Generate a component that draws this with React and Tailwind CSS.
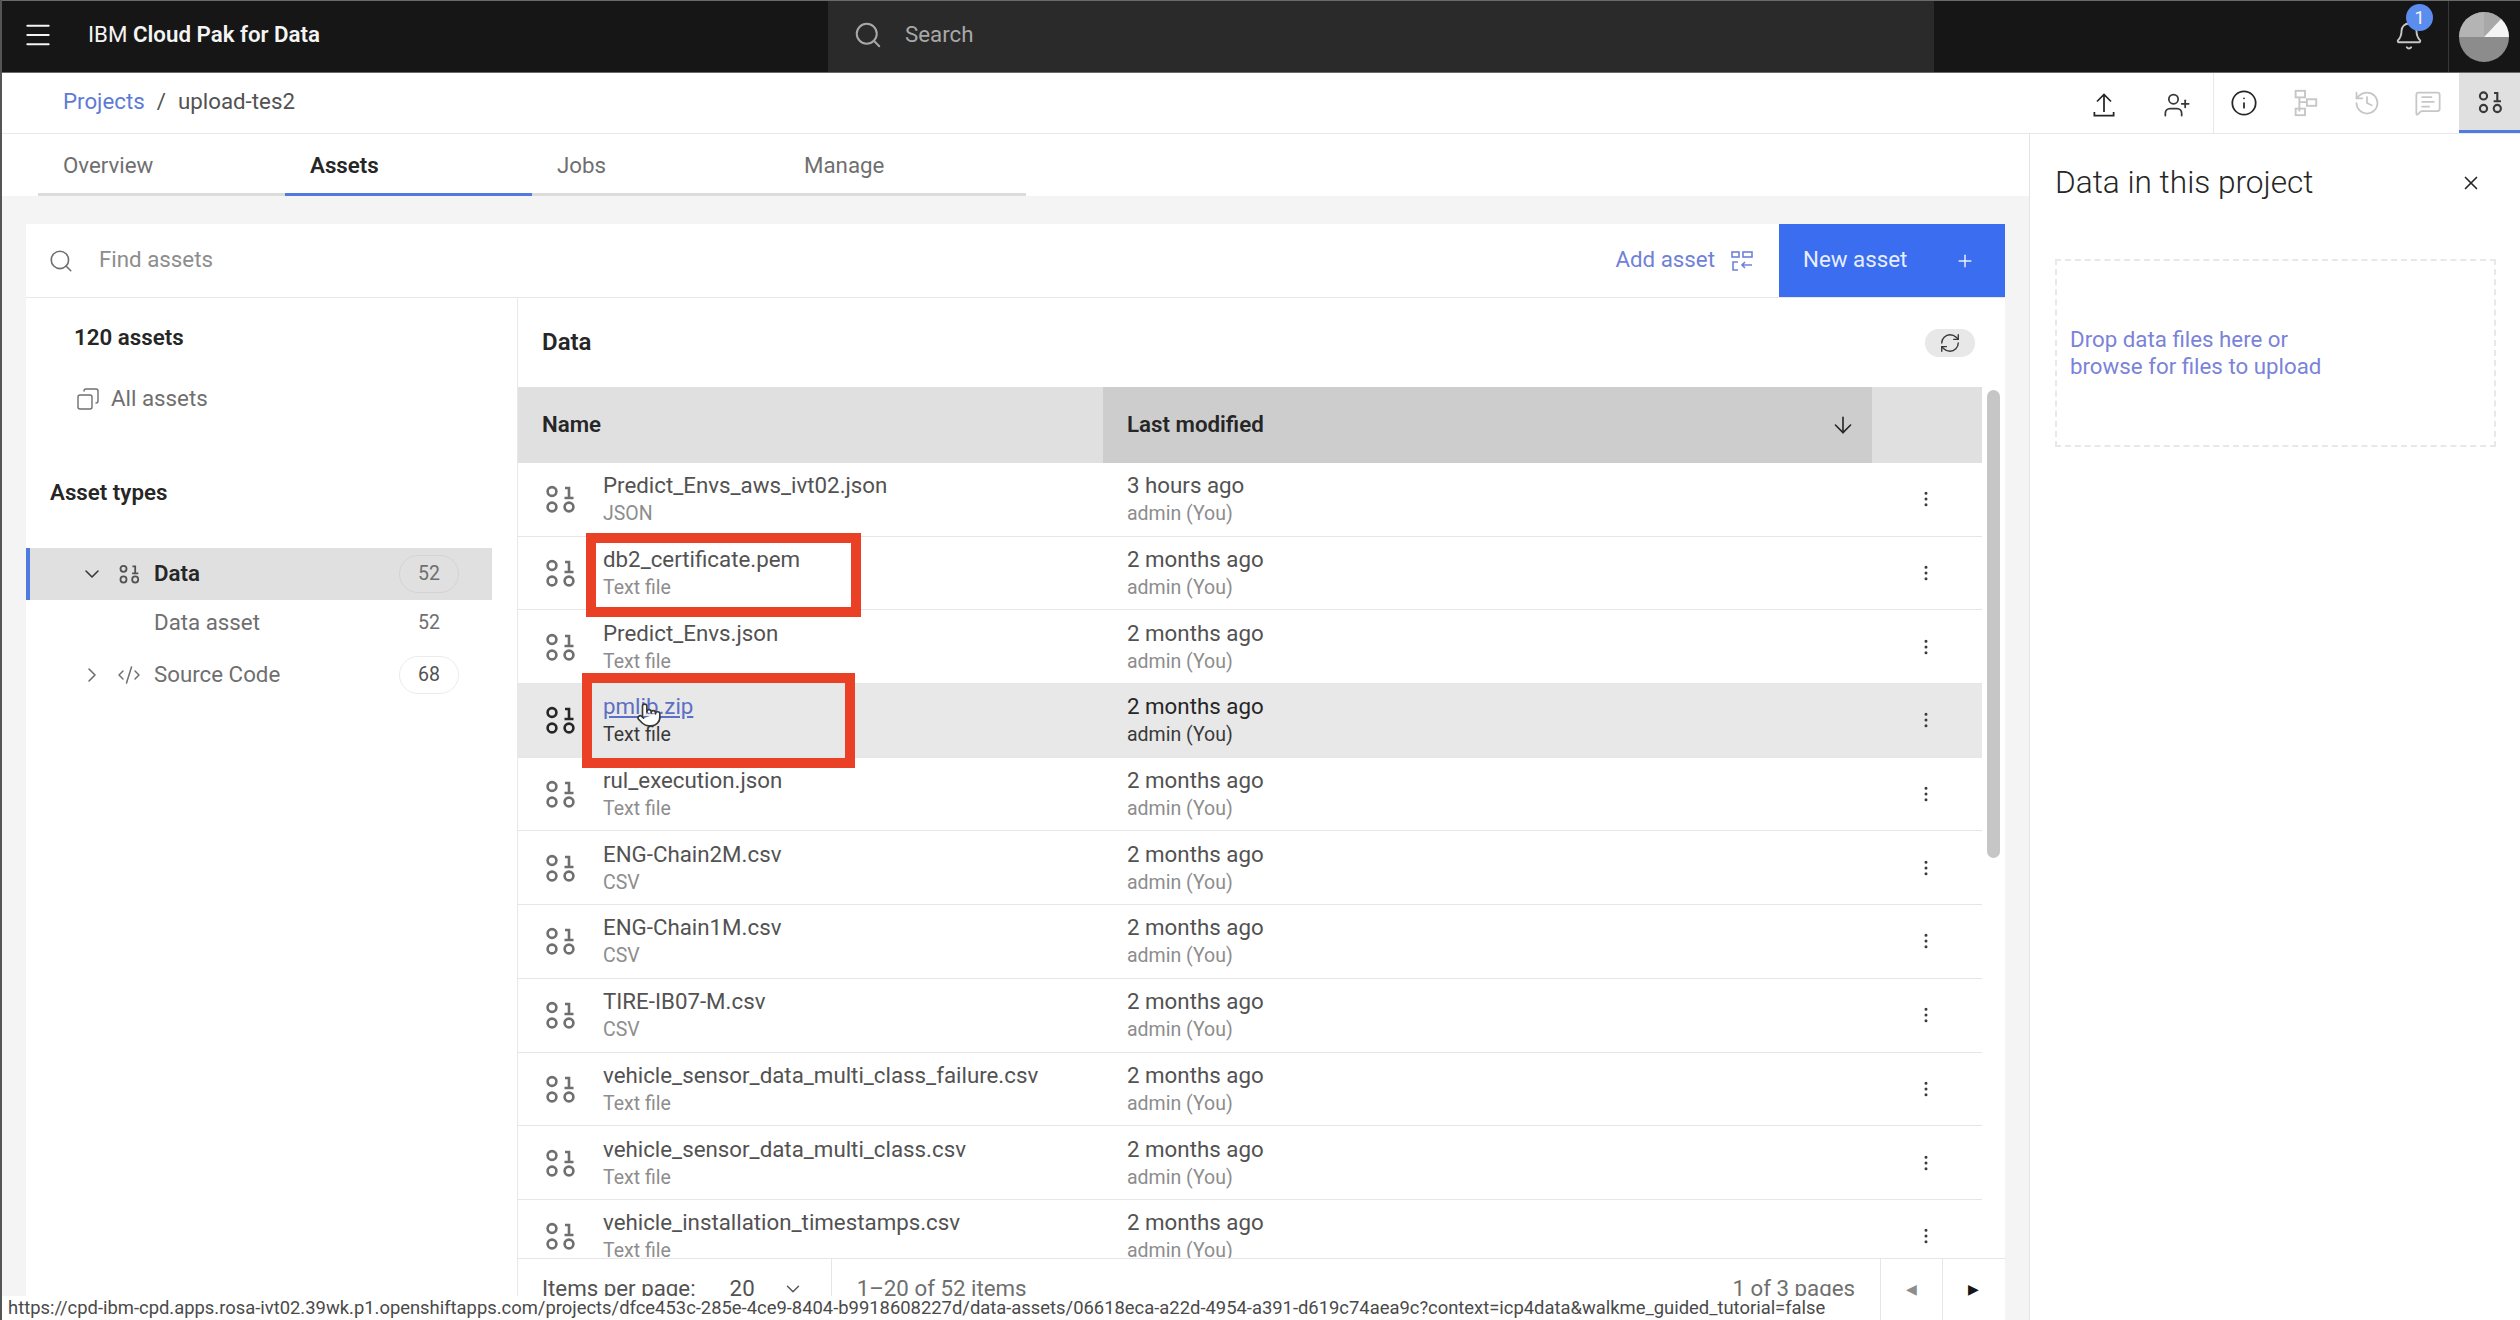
import React from 'react';
import { Menu, Search, Bell, Info, History, MessageSquareText, X, Plus, ChevronDown, ChevronRight, CodeXml, RefreshCw, EllipsisVertical, ArrowDown, Copy, Pointer, UserPlus } from 'lucide-react';

const rows = [
  ['Predict_Envs_aws_ivt02.json', 'JSON', '3 hours ago'],
  ['db2_certificate.pem', 'Text file', '2 months ago'],
  ['Predict_Envs.json', 'Text file', '2 months ago'],
  ['pmlib.zip', 'Text file', '2 months ago', true],
  ['rul_execution.json', 'Text file', '2 months ago'],
  ['ENG-Chain2M.csv', 'CSV', '2 months ago'],
  ['ENG-Chain1M.csv', 'CSV', '2 months ago'],
  ['TIRE-IB07-M.csv', 'CSV', '2 months ago'],
  ['vehicle_sensor_data_multi_class_failure.csv', 'Text file', '2 months ago'],
  ['vehicle_sensor_data_multi_class.csv', 'Text file', '2 months ago'],
  ['vehicle_installation_timestamps.csv', 'Text file', '2 months ago'],
];

const DataIcon = ({ className }) => (
  <svg viewBox="0 0 32 32" fill="none" stroke="currentColor" strokeWidth="2.6" className={className}>
    <circle cx="8" cy="8.5" r="4.4" />
    <circle cx="8" cy="24" r="4.4" />
    <circle cx="25" cy="24" r="4.4" />
    <path d="M21 5h4v10M20.5 15h9" />
  </svg>
);

const UploadIcon = () => (
  <svg viewBox="0 0 32 32" fill="none" stroke="#262626" strokeWidth="2" className="w-[28px] h-[28px]">
    <path d="M16 24V4M8 12l8-8 8 8M5 24v4h22v-4" />
  </svg>
);

const TreeIcon = () => (
  <svg viewBox="0 0 32 32" fill="none" stroke="#c6c6c6" strokeWidth="2" className="w-[30px] h-[30px]">
    <rect x="6" y="3" width="10" height="7" />
    <rect x="18" y="12" width="10" height="7" />
    <rect x="6" y="22" width="10" height="7" />
    <path d="M10 10v15M10 15h8" />
  </svg>
);

const AddAssetIcon = () => (
  <svg viewBox="0 0 22 22" fill="none" stroke="#6f82d6" strokeWidth="1.6" className="w-[22px] h-[22px]">
    <rect x="1" y="2" width="7" height="5" />
    <rect x="12" y="2" width="9" height="5" />
    <path d="M7 12H2v8h5M21 15H11M14 12l-3 3 3 3" />
  </svg>
);

const Avatar = () => (
  <svg viewBox="0 0 50 50" className="w-[50px] h-[50px]">
    <circle cx="25" cy="25" r="25" fill="#8c8c8c" />
    <path d="M25 25V0A25 25 0 0 0 0 25Z" fill="#b4b4b4" />
    <path d="M25 25V0A25 25 0 0 1 42 7Z" fill="#a8a8a8" />
    <path d="M25 25L42 7A25 25 0 0 1 50 25Z" fill="#f4f4f4" />
  </svg>
);

const Tab = ({ label, active }) => (
  <div className={`w-[247px] h-[62px] pl-[25px] pt-[5px] flex items-center border-b-[3px] ${active ? 'border-[#4f7be0] font-semibold text-[#262626]' : 'border-[#dcdcdc] text-[#6f6f6f]'}`}>
    {label}
  </div>
);

const Row = ({ name, type, time, hover }) => (
  <div className={`grid grid-cols-[585px_769px_110px] h-[73.7px] border-b border-[#e6e6e6] ${hover ? 'bg-[#e8e8e8]' : 'bg-white'}`}>
    <div className="flex items-center pl-[26px]">
      <DataIcon className={`w-[32px] h-[32px] mr-[27px] shrink-0 ${hover ? 'text-[#262626]' : 'text-[#6f6f6f]'}`} />
      <div className="flex flex-col">
        <span className={`h-[30px] leading-[30px] ${hover ? 'text-[#5d6fc4] underline' : 'text-[#525252]'}`}>{name}</span>
        <span className={`h-[28px] leading-[28px] text-[19.5px] ${hover ? 'text-[#393939]' : 'text-[#8d8d8d]'}`}>{type}</span>
      </div>
    </div>
    <div className="flex flex-col justify-center pl-[24px]">
      <span className={`h-[30px] leading-[30px] ${hover ? 'text-[#262626]' : 'text-[#525252]'}`}>{time}</span>
      <span className={`h-[28px] leading-[28px] text-[19.5px] ${hover ? 'text-[#393939]' : 'text-[#8d8d8d]'}`}>admin (You)</span>
    </div>
    <div className="flex items-center pl-[44px]">
      <EllipsisVertical className="w-[20px] h-[20px] text-[#393939]" strokeWidth={1.6} />
    </div>
  </div>
);

export default function App() {
  return (
    <div className="relative flex flex-col w-[2520px] h-[1320px] overflow-hidden bg-white border-l-2 border-[#555555] font-['Roboto',sans-serif] text-[22.3px]">
      {/* top bar */}
      <header className="flex items-center h-[73px] shrink-0 bg-[#161616] border-t border-b border-[#6a6a6a] text-[#f4f4f4]">
        <Menu className="w-[32px] h-[32px] ml-[20px] -mt-[3px]" strokeWidth={1.5} />
        <div className="ml-[34px] w-[740px] -mt-[3px] whitespace-nowrap">
          IBM <span className="font-semibold">Cloud Pak for Data</span>
        </div>
        <div className="flex items-center w-[1106px] h-full bg-[#2a2a2a] text-[#a8a8a8]">
          <Search className="w-[30px] h-[30px] ml-[25px] -mt-[3px]" strokeWidth={1.6} />
          <span className="ml-[22px] -mt-[3px]">Search</span>
        </div>
        <div className="relative ml-[460px] -mt-[2px]">
          <Bell className="w-[30px] h-[30px] text-[#c6c6c6]" strokeWidth={1.5} />
          <span className="absolute -top-[17px] left-[12px] w-[27px] h-[27px] rounded-full bg-[#5b8def] text-[18px] text-center leading-[27px]">1</span>
        </div>
        <div className="ml-[24px] h-full w-px bg-[#393939]" />
        <div className="ml-[10px]"><Avatar /></div>
      </header>

      {/* breadcrumb and actions */}
      <div className="flex items-center h-[61px] shrink-0 border-b border-[#e8e8e8]">
        <span className="ml-[61px] -mt-[3px] text-[#5d7bd6]">Projects</span>
        <span className="ml-[12px] -mt-[3px] text-[#525252]">/</span>
        <span className="ml-[12px] -mt-[3px] text-[#525252]">upload-tes2</span>
        <div className="ml-auto flex items-center h-full">
          <span className="mt-[3px] -ml-[2px]"><UploadIcon /></span>
          <UserPlus className="w-[28px] h-[28px] mt-[3px] ml-[45px] text-[#393939]" strokeWidth={1.5} />
          <div className="ml-[22px] h-full w-px bg-[#e8e8e8]" />
          <Info className="w-[28px] h-[28px] ml-[16px] text-[#262626]" strokeWidth={1.5} />
          <span className="ml-[32px]"><TreeIcon /></span>
          <History className="w-[28px] h-[28px] ml-[33px] text-[#c6c6c6]" strokeWidth={1.5} />
          <MessageSquareText className="w-[28px] h-[28px] ml-[33px] text-[#c6c6c6]" strokeWidth={1.5} />
          <div className="ml-[17px] w-[61px] h-full flex items-center justify-center bg-[#e0e0e0] border-b-[3px] border-[#4f7be0]">
            <DataIcon className="w-[26px] h-[26px] text-[#393939]" />
          </div>
        </div>
      </div>

      <div className="flex flex-1 min-h-0">
        {/* main column */}
        <div className="flex flex-col w-[2028px] bg-[#f4f4f4] border-r border-[#e4e4e4]">
          <div className="flex h-[62px] shrink-0 pl-[36px] bg-white">
            <Tab label="Overview" />
            <Tab label="Assets" active />
            <Tab label="Jobs" />
            <Tab label="Manage" />
          </div>

          <div className="flex flex-col flex-1 min-h-0 mt-[28px] ml-[24px] mr-[24px] bg-white">
            {/* toolbar */}
            <div className="flex items-center h-[74px] shrink-0 border-b border-[#e8e8e8]">
              <Search className="w-[26px] h-[26px] ml-[22px] text-[#6f6f6f]" strokeWidth={1.5} />
              <span className="ml-[25px] -mt-[1px] text-[#8d8d8d]">Find assets</span>
              <span className="ml-auto -mt-[1px] text-[#6f82d6]">Add asset</span>
              <span className="ml-[16px] mr-[26px]"><AddAssetIcon /></span>
              <div className="flex items-center w-[226px] h-full pl-[24px] pr-[30px] bg-[#3a6df0] text-[#e8eeff]">
                <span className="-mt-[1px]">New asset</span>
                <Plus className="w-[20px] h-[20px] ml-auto" strokeWidth={1.8} />
              </div>
            </div>

            <div className="flex flex-1 min-h-0">
              {/* asset types */}
              <aside className="w-[492px] shrink-0 border-r border-[#e8e8e8]">
                <div className="h-[28px] mt-[25px] ml-[48px] leading-[28px] font-semibold text-[#262626]">120 assets</div>
                <div className="flex items-center h-[28px] mt-[34px] ml-[50px] text-[#6f6f6f]">
                  <Copy className="w-[24px] h-[24px] -scale-x-100" strokeWidth={1.4} />
                  <span className="ml-[11px]">All assets</span>
                </div>
                <div className="h-[28px] mt-[65px] ml-[24px] leading-[28px] font-semibold text-[#262626]">Asset types</div>
                <div className="flex items-center h-[52px] mt-[42px] w-[466px] bg-[#e0e0e0] border-l-4 border-[#4f7be0]">
                  <ChevronDown className="w-[24px] h-[24px] ml-[50px] text-[#393939]" strokeWidth={1.6} />
                  <DataIcon className="w-[22px] h-[22px] ml-[14px] text-[#525252]" />
                  <span className="ml-[14px] font-semibold text-[#262626]">Data</span>
                  <span className="ml-auto mr-[33px] w-[60px] h-[38px] rounded-full border border-[#d4d4d4] text-center leading-[36px] text-[19.5px] text-[#6f6f6f]">52</span>
                </div>
                <div className="flex items-center h-[46px] w-[466px] text-[#6f6f6f]">
                  <span className="ml-[128px]">Data asset</span>
                  <span className="ml-auto mr-[33px] w-[60px] text-center text-[19.5px]">52</span>
                </div>
                <div className="flex items-center h-[58px] w-[466px] text-[#6f6f6f]">
                  <ChevronRight className="w-[24px] h-[24px] ml-[54px]" strokeWidth={1.6} />
                  <CodeXml className="w-[24px] h-[24px] ml-[13px]" strokeWidth={1.5} />
                  <span className="ml-[13px]">Source Code</span>
                  <span className="ml-auto mr-[33px] w-[60px] h-[38px] rounded-full border border-[#ececec] text-center leading-[36px] text-[19.5px] text-[#525252]">68</span>
                </div>
              </aside>

              {/* data table */}
              <section className="flex flex-col flex-1 min-w-0">
                <div className="flex items-center h-[89px] shrink-0">
                  <span className="ml-[24px] -mt-[2px] text-[24px] font-semibold text-[#262626]">Data</span>
                  <div className="ml-auto mr-[30px] flex items-center justify-center w-[50px] h-[28px] rounded-full bg-[#e8e8e8]">
                    <RefreshCw className="w-[22px] h-[22px] text-[#393939]" strokeWidth={1.5} />
                  </div>
                </div>
                <div className="flex flex-1 min-h-0">
                  <div className="w-[1464px] overflow-hidden">
                    <div className="grid grid-cols-[585px_769px_110px] h-[76px] font-semibold text-[#262626]">
                      <div className="flex items-center pl-[24px] bg-[#e0e0e0]">Name</div>
                      <div className="flex items-center justify-between pl-[24px] pr-[16px] bg-[#cdcdcd]">
                        Last modified
                        <ArrowDown className="w-[26px] h-[26px]" strokeWidth={1.5} />
                      </div>
                      <div className="bg-[#e0e0e0]" />
                    </div>
                    {rows.map((r) => (
                      <Row key={r[0]} name={r[0]} type={r[1]} time={r[2]} hover={r[3]} />
                    ))}
                  </div>
                  <div className="ml-[5px] mt-[3px] w-[13px] h-[468px] rounded-full bg-[#c6c6c6]" />
                </div>
                <div className="flex items-center h-[62px] shrink-0 border-t border-[#e6e6e6] text-[#525252]">
                  <span className="ml-[24px] -mt-[2px]">Items per page:</span>
                  <span className="ml-[34px] -mt-[2px]">20</span>
                  <ChevronDown className="w-[22px] h-[22px] ml-[27px] -mt-[2px]" strokeWidth={1.5} />
                  <div className="ml-[27px] h-full w-px bg-[#e6e6e6]" />
                  <span className="ml-[25px] -mt-[2px] text-[#6f6f6f]">1–20 of 52 items</span>
                  <span className="ml-auto -mt-[2px] text-[#6f6f6f]">1 of 3 pages</span>
                  <div className="ml-[25px] h-full w-[62px] flex items-center justify-center border-l border-[#e6e6e6] text-[14px] text-[#8d8d8d]">◀</div>
                  <div className="h-full w-[63px] pr-[2px] flex items-center justify-center border-l border-[#e6e6e6] text-[14px] text-[#161616]">▶</div>
                </div>
              </section>
            </div>
          </div>
        </div>

        {/* side panel */}
        <aside className="flex-1 min-w-0 pt-[29px] pl-[25px]">
          <div className="flex items-center h-[40px]">
            <span className="text-[31.6px] text-[#262626] font-light">Data in this project</span>
            <X className="w-[22px] h-[22px] ml-auto mr-[38px] text-[#262626]" strokeWidth={1.8} />
          </div>
          <div className="flex items-center mt-[56px] w-[441px] h-[188px] pl-[13px] border-2 border-dashed border-[#e8e8e8] text-[#7a83d8]">
            <p className="leading-[27px]">Drop data files here or<br />browse for files to upload</p>
          </div>
        </aside>
      </div>

      {/* red callouts from the recording */}
      <div className="absolute left-[584px] top-[533px] w-[275px] h-[84px] border-[10px] border-[#ea4025]" />
      <div className="absolute left-[580px] top-[673px] w-[273px] h-[95px] border-[10px] border-[#ea4025]" />
      <Pointer className="absolute left-[634px] top-[702px] w-[26px] h-[26px] text-[#393939] fill-white" strokeWidth={1.5} />

      {/* browser link preview */}
      <div className="absolute left-0 bottom-0 flex items-center w-[1834px] h-[24px] pl-[6px] bg-white text-[18.4px] text-[#4a4a4a] whitespace-nowrap overflow-hidden">
        https://cpd-ibm-cpd.apps.rosa-ivt02.39wk.p1.openshiftapps.com/projects/dfce453c-285e-4ce9-8404-b9918608227d/data-assets/06618eca-a22d-4954-a391-d619c74aea9c?context=icp4data&amp;walkme_guided_tutorial=false
      </div>
    </div>
  );
}
